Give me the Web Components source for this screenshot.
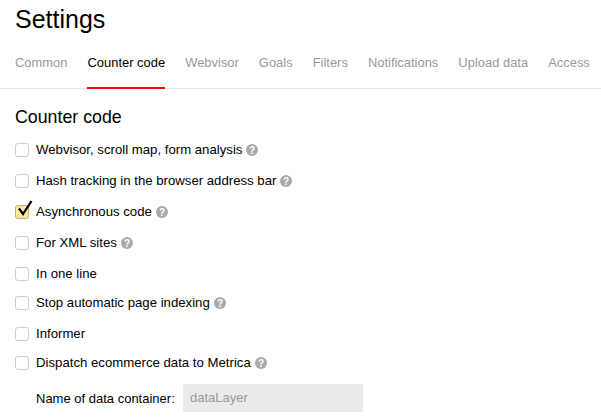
<!DOCTYPE html>
<html>
<head>
<meta charset="utf-8">
<style>
html, body { margin: 0; padding: 0; background: #fff; overflow: hidden; }
body { font-family: "Liberation Sans", Arial, sans-serif; color: #000; }
</style>
</head>
<body>
<settings-page>
    <tab-bar>
        <tab-item>Common</tab-item>
        <tab-item active>Counter code</tab-item>
        <tab-item>Webvisor</tab-item>
        <tab-item>Goals</tab-item>
        <tab-item>Filters</tab-item>
        <tab-item>Notifications</tab-item>
        <tab-item>Upload data</tab-item>
        <tab-item>Access</tab-item>
    </tab-bar>
    <check-row hint>Webvisor, scroll map, form analysis</check-row>
    <check-row hint>Hash tracking in the browser address bar</check-row>
    <check-row hint checked>Asynchronous code</check-row>
    <check-row hint>For XML sites</check-row>
    <check-row compact>In one line</check-row>
    <check-row hint>Stop automatic page indexing</check-row>
    <check-row compact>Informer</check-row>
    <check-row hint>Dispatch ecommerce data to Metrica</check-row>
    <field-row label="Name of data container:" value="dataLayer"></field-row>
</settings-page>
<script>
class SettingsPage extends HTMLElement {
    constructor() {
        super();
        this.attachShadow({ mode: 'open' });
    }

    connectedCallback() {
        this.shadowRoot.innerHTML = `
            <style>
                :host { display: block; width: 601px; height: 419px; overflow: hidden; }
                h1 { margin: 0; padding: 5px 0 0 15px; font-size: 25px; line-height: 28px; font-weight: 400; }
                h2 { margin: 0; padding: 18px 0 0 15px; font-size: 17.8px; line-height: 20px; font-weight: 400; }
                .rows { display: flex; flex-direction: column; padding-top: 7px; }
            </style>
            <h1>Settings</h1>
            <slot name="tabs"></slot>
            <h2>Counter code</h2>
            <div class="rows"><slot></slot></div>
        `;
        this.querySelector('tab-bar').slot = 'tabs';
    }
}

class TabBar extends HTMLElement {
    constructor() {
        super();
        this.attachShadow({ mode: 'open' });
    }

    connectedCallback() {
        this.shadowRoot.innerHTML = `
            <style>
                :host {
                    display: flex;
                    gap: 20px;
                    box-sizing: border-box;
                    height: 56px;
                    padding-left: 15px;
                    border-bottom: 1px solid #e5e5e5;
                    align-items: stretch;
                    white-space: nowrap;
                }
            </style>
            <slot></slot>
        `;
    }
}

class TabItem extends HTMLElement {
    constructor() {
        super();
        this.attachShadow({ mode: 'open' });
    }

    connectedCallback() {
        this.shadowRoot.innerHTML = `
            <style>
                :host {
                    display: block;
                    box-sizing: border-box;
                    height: 56px;
                    padding-top: 22px;
                    font-size: 12.95px;
                    line-height: 16px;
                    color: #999;
                }
                :host([active]) { color: #000; border-bottom: 2px solid #f00; }
            </style>
            <slot></slot>
        `;
    }
}

class CheckRow extends HTMLElement {
    constructor() {
        super();
        this.attachShadow({ mode: 'open' });
    }

    connectedCallback() {
        const tick = this.hasAttribute('checked') ? `
            <svg class="tick" width="20" height="19" viewBox="0 0 20 19">
                <path d="M5 9.5 L9 15 L17.5 2" fill="none" stroke="#000" stroke-width="2.2"/>
            </svg>` : '';
        const hint = this.hasAttribute('hint') ? `
            <svg class="hint" width="12" height="12" viewBox="0 0 12 12">
                <circle cx="6" cy="6" r="6" fill="#aaa"/>
                <text x="6" y="9.6" text-anchor="middle" font-size="10" font-weight="700" font-family="Liberation Sans" fill="#fff">?</text>
            </svg>` : '';
        this.shadowRoot.innerHTML = `
            <style>
                :host {
                    display: flex;
                    align-items: center;
                    height: 31px;
                    padding-left: 15px;
                    font-size: 13.2px;
                    white-space: nowrap;
                }
                :host([compact]) { margin-bottom: -2px; }
                .box {
                    position: relative;
                    box-sizing: border-box;
                    width: 14px;
                    height: 14px;
                    margin-right: 7px;
                    flex: none;
                    background: #fff;
                    border: 1px solid #ccc;
                    border-radius: 3px;
                }
                :host([checked]) .box { background: #ffeba0; border-color: #c4b171; }
                .tick { position: absolute; left: -2px; top: -7px; }
                .hint { margin-left: 4px; flex: none; }
            </style>
            <span class="box">${tick}</span>
            <slot></slot>
            ${hint}
        `;
    }
}

class FieldRow extends HTMLElement {
    constructor() {
        super();
        this.attachShadow({ mode: 'open' });
    }

    connectedCallback() {
        this.shadowRoot.innerHTML = `
            <style>
                :host {
                    display: flex;
                    align-items: center;
                    height: 28px;
                    margin-top: 6px;
                    padding-left: 36px;
                    font-size: 13px;
                    white-space: nowrap;
                }
                .label { width: 147px; }
                .input {
                    box-sizing: border-box;
                    width: 180px;
                    height: 28px;
                    padding: 6px 7px;
                    line-height: 16px;
                    background: #ebebeb;
                    color: #999;
                }
            </style>
            <span class="label">${this.getAttribute('label')}</span>
            <span class="input">${this.getAttribute('value')}</span>
        `;
    }
}

customElements.define('settings-page', SettingsPage);
customElements.define('tab-bar', TabBar);
customElements.define('tab-item', TabItem);
customElements.define('check-row', CheckRow);
customElements.define('field-row', FieldRow);
</script>
</body>
</html>
